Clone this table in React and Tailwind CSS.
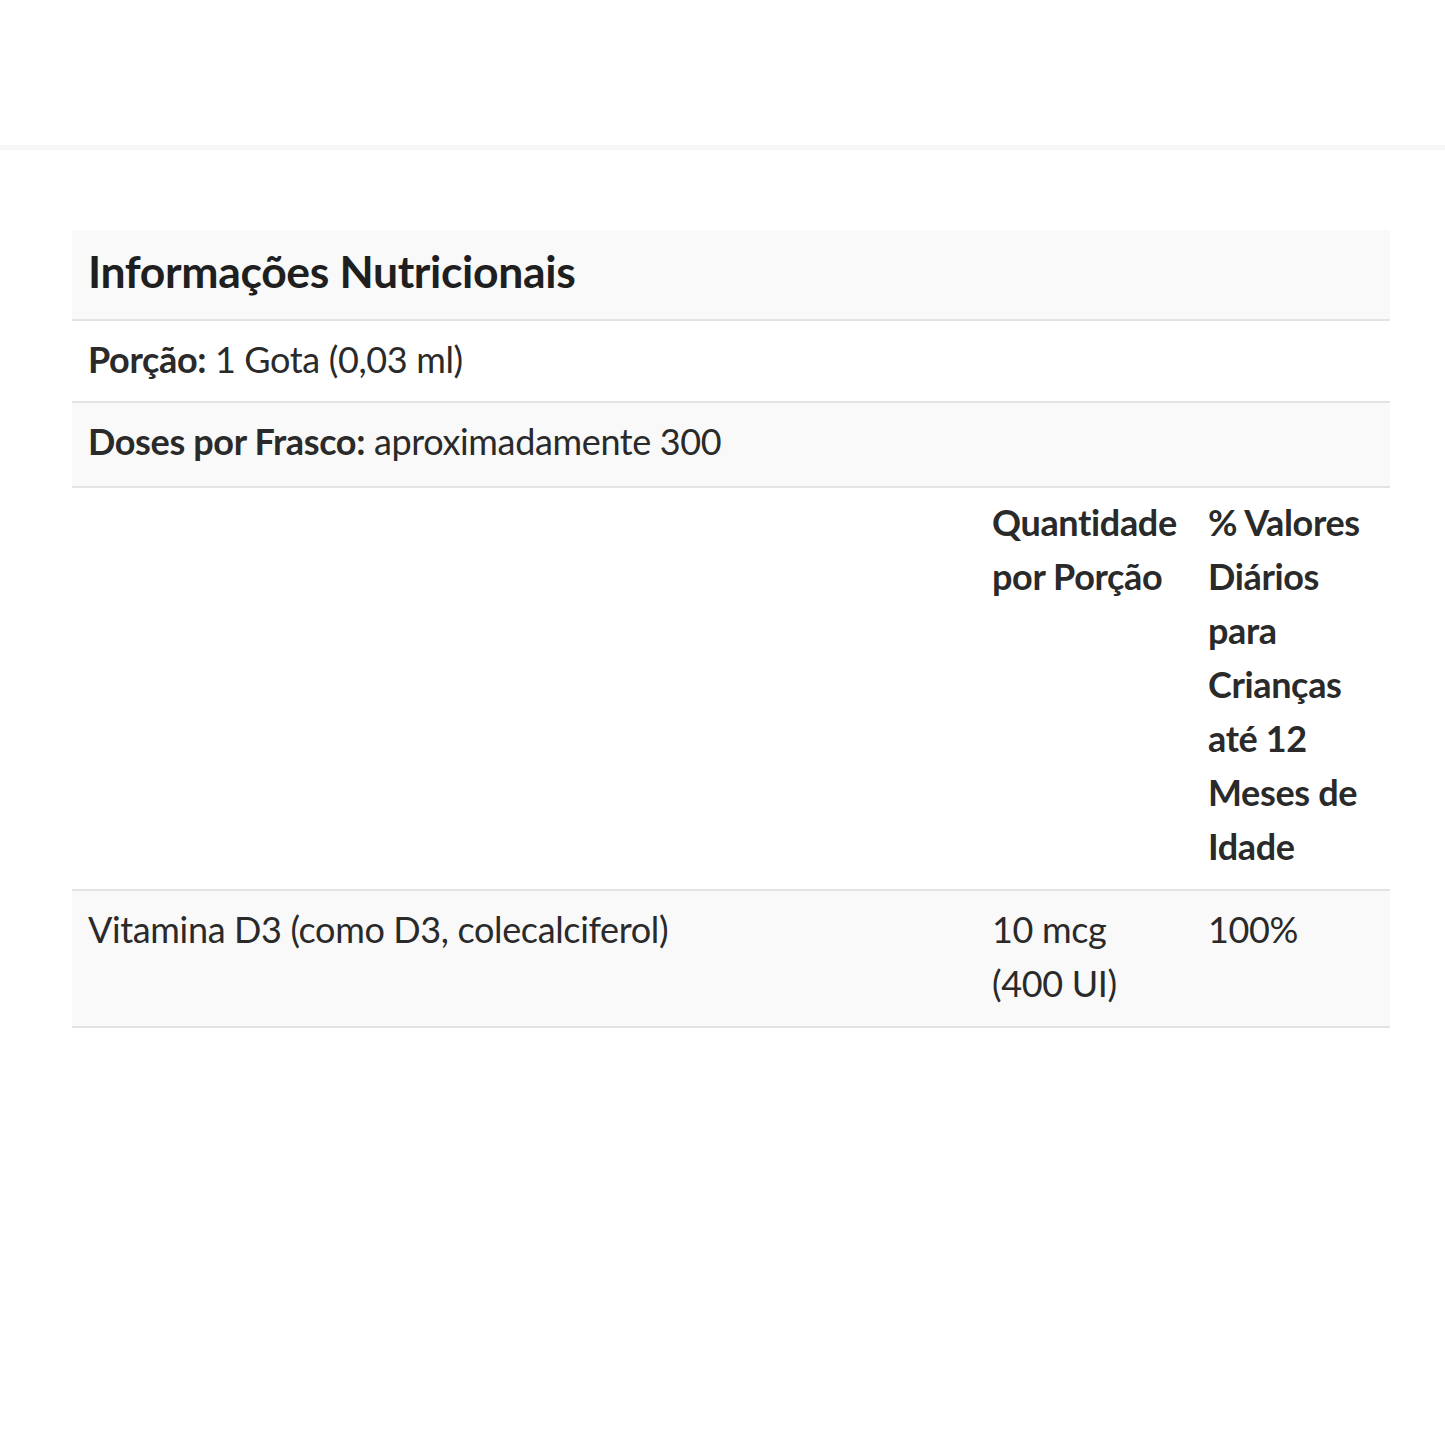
export default function App() {
  const font = { fontFamily: 'Lato, "Open Sans", sans-serif' };

  return (
    <div className="min-h-[1445px] bg-white text-[#2a2a2a]" style={font}>
      {/* top bar edge */}
      <div className="h-[145px] bg-white" />
      <div className="h-[5px] bg-[#f7f7f7]" />

      <div className="px-[72px] pt-[80px]">
        <table className="w-[1318px] table-fixed border-collapse text-[36px] leading-[54px] tracking-[-0.01em]">
          <colgroup>
            <col className="w-[904px]" />
            <col className="w-[216px]" />
            <col className="w-[198px]" />
          </colgroup>
          <tbody>
            <tr className="bg-[#f9f9f9] border-b-2 border-[#e3e3e3]">
              <th colSpan={3} className="text-left font-bold text-[44.5px] leading-[58px] px-4 pt-[12px] pb-[19px] text-[#1f1f1f]">
                Informações Nutricionais
              </th>
            </tr>
            <tr className="border-b-2 border-[#e3e3e3]">
              <td colSpan={3} className="px-4 pt-[11px] pb-[15px]">
                <span className="font-bold">Porção:</span> 1 Gota (0,03 ml)
              </td>
            </tr>
            <tr className="bg-[#f9f9f9] border-b-2 border-[#e3e3e3]">
              <td colSpan={3} className="px-4 pt-[11px] pb-[18px]">
                <span className="font-bold">Doses por Frasco:</span> aproximadamente 300
              </td>
            </tr>
            <tr className="border-b-2 border-[#e3e3e3] align-top">
              <th className="px-4" />
              <th className="text-left font-bold pl-4 pr-1 pt-[7px] pb-[16px]">
                Quantidade por Porção
              </th>
              <th className="text-left font-bold pl-4 pr-2 pt-[7px] pb-[16px]">
                % Valores Diários para Crianças até 12 Meses de Idade
              </th>
            </tr>
            <tr className="bg-[#f9f9f9] border-b-2 border-[#e3e3e3] align-top">
              <td className="px-4 pt-[11px] pb-[16px]">
                Vitamina D3 (como D3, colecalciferol)
              </td>
              <td className="pl-4 pr-1 pt-[11px] pb-[16px]">10 mcg (400&nbsp;UI)</td>
              <td className="pl-4 pr-2 pt-[11px] pb-[16px]">100%</td>
            </tr>
          </tbody>
        </table>
      </div>
    </div>
  );
}
